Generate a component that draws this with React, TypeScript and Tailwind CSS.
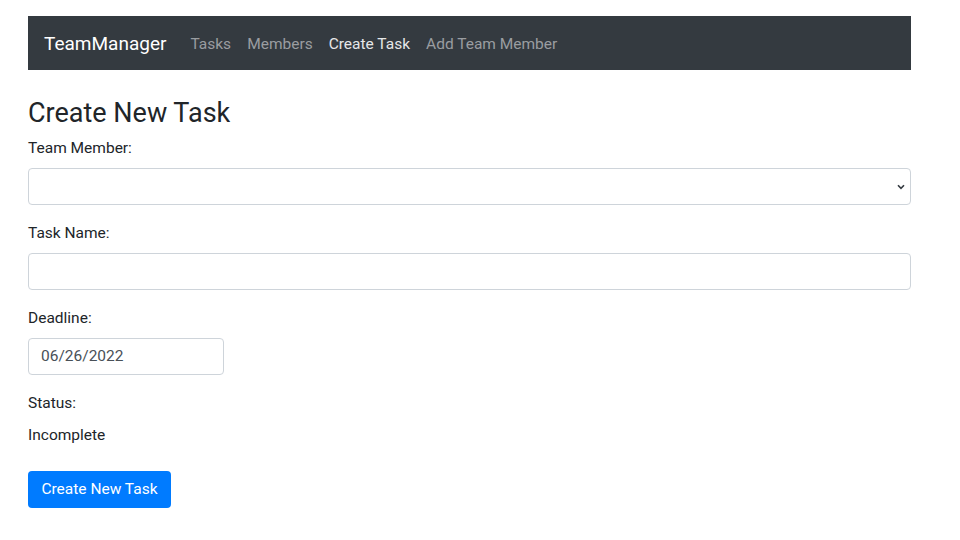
export default function App() {
    const font = { fontFamily: "Roboto, 'Liberation Sans', Arial, sans-serif" }

    return (
        <div className="min-h-screen bg-white pt-4" style={font}>
            <div className="ml-[28px] w-[883px]">
                {/* Navbar */}
                <nav className="flex items-center h-[54px] bg-[#343a40] px-4 pt-[3px]">
                    <span className="text-[19px] text-white mr-4">TeamManager</span>
                    <div className="flex items-center text-[15.5px]">
                        <span className="px-2 text-[#9a9da1]">Tasks</span>
                        <span className="px-2 text-[#9a9da1]">Members</span>
                        <span className="px-2 text-[#e6e7e8]">Create Task</span>
                        <span className="px-2 text-[#9a9da1]">Add Team Member</span>
                    </div>
                </nav>

                {/* Form */}
                <h3 className="mt-[28px] mb-2 text-[27px] leading-[30px] text-[#212529]">Create New Task</h3>

                <div className="text-[15.5px] text-[#212529]">
                    <div className="mb-4">
                        <div className="leading-6 mb-2">Team Member:</div>
                        <div className="relative h-[37px] rounded border border-[#ced4da] bg-white">
                            <svg className="absolute right-[5px] top-[15px]" width="8" height="6" viewBox="0 0 8 6">
                                <path d="M1 1.2 L4 4.4 L7 1.2" fill="none" stroke="#343a40" strokeWidth="1.6" />
                            </svg>
                        </div>
                    </div>

                    <div className="mb-4">
                        <div className="leading-6 mb-2">Task Name:</div>
                        <div className="h-[37px] rounded border border-[#ced4da] bg-white"></div>
                    </div>

                    <div className="mb-4">
                        <div className="leading-6 mb-2">Deadline:</div>
                        <div className="flex items-center h-[37px] w-[196px] rounded border border-[#ced4da] px-3 text-[#495057]">
                            06/26/2022
                        </div>
                    </div>

                    <div className="leading-6 mb-2">Status:</div>
                    <div className="leading-6 mb-6">Incomplete</div>

                    <button className="h-[37px] w-[143px] rounded bg-[#007bff] text-white text-[15.5px]">
                        Create New Task
                    </button>
                </div>
            </div>
        </div>
    )
}
